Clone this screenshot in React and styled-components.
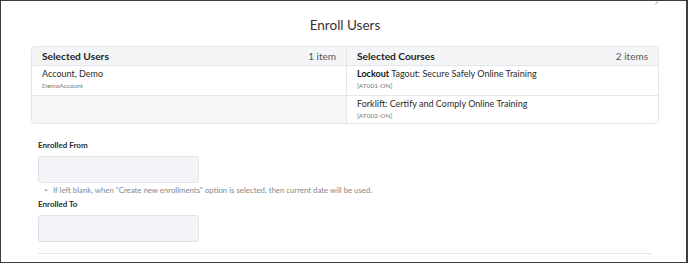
import React from "react";
import styled, { createGlobalStyle } from "styled-components";

const GlobalStyle = createGlobalStyle`
  html, body {
    margin: 0;
    padding: 0;
    background: #ffffff;
  }
  body {
    font-family: Lato, "Noto Sans", sans-serif;
    color: #222;
  }
`;

const users = [{ name: "Account, Demo", login: "DemoAccount" }];

const courses = [
  { lead: "Lockout", rest: " Tagout: Secure Safely Online Training", code: "[AT001-ON]" },
  { lead: "", rest: "Forklift: Certify and Comply Online Training", code: "[AT002-ON]" },
];

const App = () => {
  const rows = Math.max(users.length, courses.length);
  return (
    <>
      <GlobalStyle />
      <Frame>
        <Corner>&#8599;</Corner>
        <Title>Enroll Users</Title>
        <Table>
          <Column>
            <HeadCell>
              <HeadTitle>Selected Users</HeadTitle>
              <Count>1 item</Count>
            </HeadCell>
            {Array.from({ length: rows }).map((_, i) =>
              users[i] ? (
                <Cell key={i}>
                  <Main>{users[i].name}</Main>
                  <Sub>{users[i].login}</Sub>
                </Cell>
              ) : (
                <Cell key={i} empty />
              )
            )}
          </Column>
          <Column divided>
            <HeadCell>
              <HeadTitle>Selected Courses</HeadTitle>
              <Count>2 items</Count>
            </HeadCell>
            {courses.map((c, i) => (
              <Cell key={i}>
                <Main>
                  {c.lead && <b>{c.lead}</b>}
                  {c.rest}
                </Main>
                <Sub>{c.code}</Sub>
              </Cell>
            ))}
          </Column>
        </Table>
        <Form>
          <Label>Enrolled From</Label>
          <Input />
          <Hint>
            <Caret>&#9650;</Caret>
            If left blank, when "Create new enrollments" option is selected, then current date will be used.
          </Hint>
          <Label spaced>Enrolled To</Label>
          <Input />
        </Form>
        <Divider />
      </Frame>
    </>
  );
};

const Frame = styled.div`
  position: relative;
  box-sizing: border-box;
  width: 688px;
  height: 263px;
  border: 1px solid #3c3c3c;
  border-right-width: 2px;
  padding: 16px 27px 0 30px;
  display: flex;
  flex-direction: column;
`;

const Corner = styled.span`
  position: absolute;
  top: 0;
  right: 28px;
  font-size: 5px;
  line-height: 5px;
  color: #999;
`;

const Title = styled.div`
  text-align: center;
  font-size: 13.5px;
  color: #333;
  margin-bottom: 13px;
`;

const Table = styled.div`
  display: grid;
  grid-template-columns: 314px 1fr;
  border: 1px solid #e4e6ea;
  border-radius: 4px;
  overflow: hidden;
`;

const Column = styled.div`
  display: flex;
  flex-direction: column;
  ${(props) => props.divided && `border-left: 1px solid #e4e6ea;`}
`;

const HeadCell = styled.div`
  height: 19px;
  box-sizing: border-box;
  display: flex;
  align-items: center;
  justify-content: space-between;
  padding: 0 10px;
  background: #f4f5f7;
  border-bottom: 1px solid #e4e6ea;
`;

const HeadTitle = styled.span`
  font-size: 10.2px;
  font-weight: 700;
  color: #1f1f1f;
`;

const Count = styled.span`
  font-size: 10px;
  color: #555;
`;

const Cell = styled.div`
  height: 29px;
  box-sizing: border-box;
  padding: 2px 10px 0;
  display: flex;
  flex-direction: column;
  ${(props) => props.empty && `background: #f5f6f8;`}
  & + & {
    border-top: 1px solid #e4e6ea;
  }
  &:last-child {
    height: 28px;
  }
`;

const Main = styled.div`
  font-size: 9px;
  color: #2b2b2b;
  line-height: 12px;
  b {
    font-weight: 700;
    color: #111;
  }
`;

const Sub = styled.div`
  font-size: 6.5px;
  color: #777;
  line-height: 9px;
  margin-top: 1px;
`;

const Form = styled.div`
  display: flex;
  flex-direction: column;
  align-items: flex-start;
  padding: 16px 0 0 7px;
`;

const Label = styled.div`
  font-size: 8px;
  font-weight: 700;
  color: #2a2a2a;
  line-height: 10px;
  margin-bottom: 6px;
  ${(props) => props.spaced && `margin-top: 4px;`}
`;

const Input = styled.div`
  box-sizing: border-box;
  width: 161px;
  height: 27px;
  background: #f2f4f7;
  border: 1px solid #dfe2e6;
  border-radius: 3px;
`;

const Hint = styled.div`
  font-size: 7.8px;
  color: #888;
  line-height: 10px;
  margin-top: 2px;
  padding-left: 6px;
  display: flex;
  align-items: center;
`;

const Caret = styled.span`
  font-size: 4px;
  margin-right: 5px;
`;

const Divider = styled.div`
  margin: 11px 8px 0 8px;
  border-top: 1px dotted #cfcfcf;
`;

export default App;
